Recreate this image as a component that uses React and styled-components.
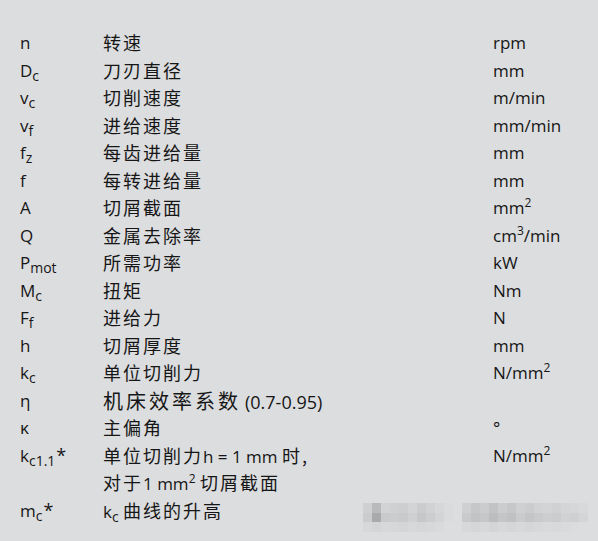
import React from 'react';
import styled, { createGlobalStyle } from 'styled-components';

const Global = createGlobalStyle`
	html, body {
		margin: 0;
		padding: 0;
		background: #dcdddf;
	}
	body {
		width: 598px;
		height: 541px;
		overflow: hidden;
		font-family: "Open Sans", "Noto Sans CJK SC", sans-serif;
		color: #161616;
	}
`

const Page = styled.div`
	position: relative;
	width: 598px;
	height: 541px;
	box-sizing: border-box;
	padding: 29px 0 0 20px;
`

const Table = styled.div`
	display: grid;
	grid-template-columns: 83px 390px 1fr;
	grid-auto-rows: 27.5px;
	font-size: 17px;
	line-height: 27.5px;
`

const Cell = styled.div`
	white-space: nowrap;
`

const Han = styled.span`
	font-family: "Noto Sans CJK SC", sans-serif;
	font-size: ${p => (p.$big ? '20px' : '18px')};
	letter-spacing: ${p => (p.$big ? '3px' : '2px')};
`

const Note = styled.span`
	font-size: 18px;
	margin-left: 4px;
`

const Sub = styled.sub`
	font-size: 14px;
	vertical-align: -4px;
	line-height: 0;
`

const Sup = styled.sup`
	font-size: 12px;
	vertical-align: 7px;
	line-height: 0;
`

const Star = styled.span`
	font-size: 18px;
	margin-left: 1px;
`

const Mosaic = styled.div`
	position: absolute;
	left: 363px;
	top: 503px;
	display: grid;
	grid-template-columns: repeat(25, 9px);
	grid-auto-rows: 9.5px;
`

const rows = [
	{ sym: 'n', desc: <Han>转速</Han>, unit: 'rpm' },
	{ sym: <>D<Sub>c</Sub></>, desc: <Han>刀刃直径</Han>, unit: 'mm' },
	{ sym: <>v<Sub>c</Sub></>, desc: <Han>切削速度</Han>, unit: 'm/min' },
	{ sym: <>v<Sub>f</Sub></>, desc: <Han>进给速度</Han>, unit: 'mm/min' },
	{ sym: <>f<Sub>z</Sub></>, desc: <Han>每齿进给量</Han>, unit: 'mm' },
	{ sym: 'f', desc: <Han>每转进给量</Han>, unit: 'mm' },
	{ sym: 'A', desc: <Han>切屑截面</Han>, unit: <>mm<Sup>2</Sup></> },
	{ sym: 'Q', desc: <Han>金属去除率</Han>, unit: <>cm<Sup>3</Sup>/min</> },
	{ sym: <>P<Sub>mot</Sub></>, desc: <Han>所需功率</Han>, unit: 'kW' },
	{ sym: <>M<Sub>c</Sub></>, desc: <Han>扭矩</Han>, unit: 'Nm' },
	{ sym: <>F<Sub>f</Sub></>, desc: <Han>进给力</Han>, unit: 'N' },
	{ sym: 'h', desc: <Han>切屑厚度</Han>, unit: 'mm' },
	{ sym: <>k<Sub>c</Sub></>, desc: <Han>单位切削力</Han>, unit: <>N/mm<Sup>2</Sup></> },
	{ sym: 'η', desc: <><Han $big>机床效率系数</Han><Note>(0.7-0.95)</Note></>, unit: '' },
	{ sym: 'κ', desc: <Han>主偏角</Han>, unit: '°' },
	{ sym: <>k<Sub>c1.1</Sub><Star>*</Star></>, desc: <><Han>单位切削力</Han>h = 1 mm <Han>时,</Han></>, unit: <>N/mm<Sup>2</Sup></> },
	{ sym: '', desc: <><Han>对于</Han>1 mm<Sup>2</Sup> <Han>切屑截面</Han></>, unit: '' },
	{ sym: <>m<Sub>c</Sub><Star>*</Star></>, desc: <>k<Sub>c</Sub> <Han>曲线的升高</Han></>, unit: '' },
]

const shades = [
	'cfd0d2','b9babc','d2d3d5','cfd0d2','cdcecf','d3d4d6','cbcccd','d1d2d4','d6d7d9','dadbdd','dcdddf','cfd0d2','c6c7c9','cbcccd','c2c3c5','cccdcf','c6c7c9','cfd0d2','cbcccd','d1d2d4','d3d4d6','d0d1d3','d4d5d7','d6d7d9','d8d9db',
	'cbcccd','a9aaac','c9cacc','cbcccd','c9cacc','cfd0d2','c6c7c9','cccdcf','d3d4d6','dadbdd','dcdddf','c9cacc','c2c3c5','c6c7c9','bcbdbf','c4c5c7','c0c1c3','cacbcd','c4c5c7','c9cacc','cdcecf','cbcccd','d1d2d4','cfd0d2','d4d5d7',
	'd7d8da','d4d5d7','d7d8da','d6d7d9','d4d5d7','d7d8da','d5d6d8','d7d8da','d9dadc','dcdddf','dcdddf','d7d8da','d5d6d8','d7d8da','d4d5d7','d7d8da','d5d6d8','d7d8da','d5d6d8','d7d8da','d9dadc','d8d9db','d9dadc','dbdcde','dcdddf',
]

export default function App() {
	return (
		<Page>
			<Global />
			<Table>
				{rows.map((row, i) => (
					<React.Fragment key={i}>
						<Cell>{row.sym}</Cell>
						<Cell>{row.desc}</Cell>
						<Cell>{row.unit}</Cell>
					</React.Fragment>
				))}
			</Table>
			<Mosaic>
				{shades.map((c, i) => <div key={i} style={{ background: '#' + c }} />)}
			</Mosaic>
		</Page>
	)
}
